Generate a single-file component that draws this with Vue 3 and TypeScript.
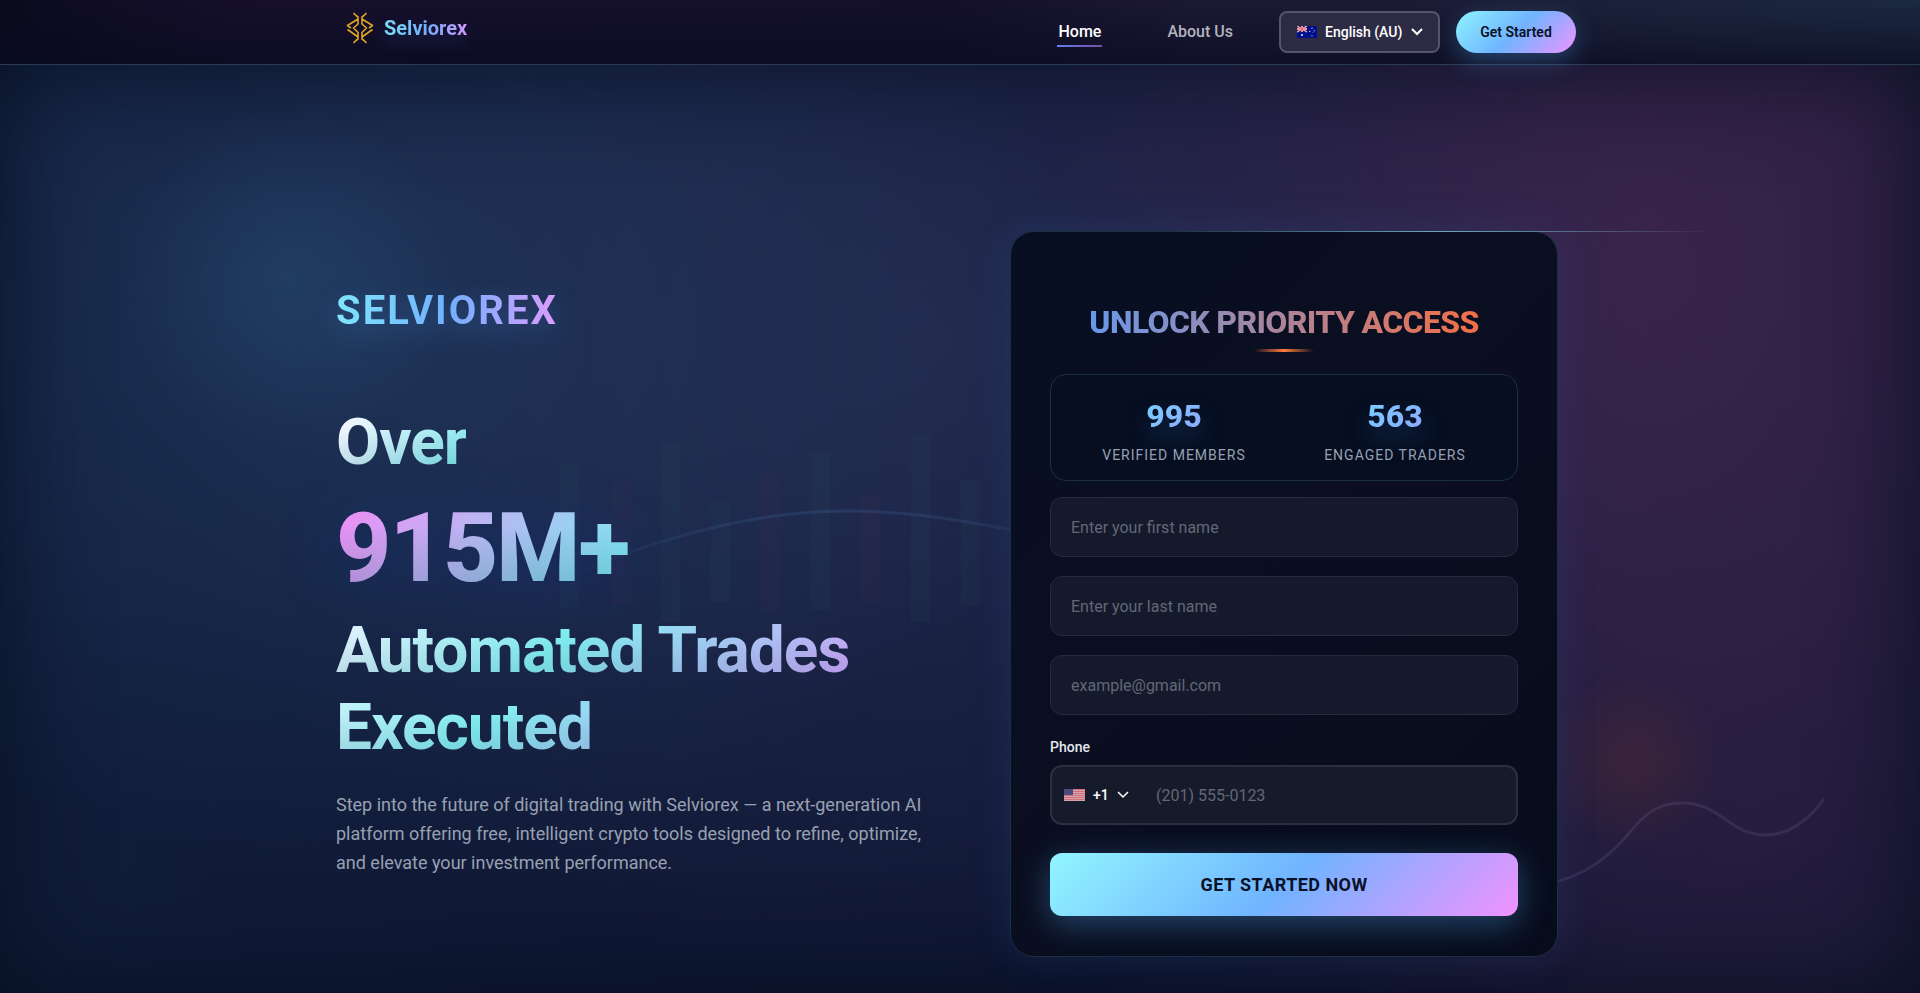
<script setup lang="ts">
import { ref } from 'vue'

interface Candle { x: number; y: number; h: number; up: boolean }
interface Field { id: string; type: string; label: string; placeholder: string }

const candles: Candle[] = [
  { x: 560, y: 462, h: 146, up: true },
  { x: 611, y: 480, h: 124, up: false },
  { x: 661, y: 442, h: 180, up: true },
  { x: 711, y: 502, h: 100, up: true },
  { x: 761, y: 474, h: 136, up: false },
  { x: 811, y: 452, h: 158, up: true },
  { x: 861, y: 494, h: 108, up: false },
  { x: 911, y: 434, h: 188, up: true },
  { x: 961, y: 480, h: 126, up: true },
]

const stats = [
  { value: '995', label: 'Verified Members' },
  { value: '563', label: 'Engaged Traders' },
]

const fields: Field[] = [
  { id: 'first-name', type: 'text', label: 'First name', placeholder: 'Enter your first name' },
  { id: 'last-name', type: 'text', label: 'Last name', placeholder: 'Enter your last name' },
  { id: 'email', type: 'email', label: 'Email', placeholder: 'example@gmail.com' },
]

const form = ref<Record<string, string>>({ 'first-name': '', 'last-name': '', email: '' })
const phone = ref('')
const language = ref('en-AU')
const dialCode = ref('+1')
</script>

<template>
  <div class="page">
    <header class="header">
      <div class="header-inner">
        <a class="logo" href="#">
          <svg class="logo-mark" width="28" height="32" viewBox="0 0 28 32" aria-hidden="true">
            <g fill="none" stroke="#e0a526" stroke-width="1.6" stroke-linejoin="round">
              <path d="M7.500 1l2.500 2.500 2 1.500V12L7.500 16l4.500 4.500V27l-2 1.500L7.500 31M12 7L1.500 13.500 5 16M1.500 17.500L12 25" />
              <path d="M20.500 1L18 3.500 16 5V12l4.500 4-4.500 4.500V27l2 1.500 2.500 2.500M16 7l10.500 6.500L23 16M26.500 17.500L16 25" />
            </g>
          </svg>
          <span class="logo-text">Selviorex</span>
        </a>
        <nav class="nav">
          <a class="nav-link active" href="#">Home</a>
          <a class="nav-link" href="#about">About Us</a>
        </nav>
        <div class="language">
          <svg width="20" height="12" viewBox="0 0 20 12" aria-hidden="true">
            <rect width="20" height="12" fill="#00108a" />
            <path d="M0 0l10 6M10 0L0 6" stroke="#fff" stroke-width="1.400" />
            <path d="M0 0l10 6M10 0L0 6" stroke="#e0303c" stroke-width="0.600" />
            <path d="M5 0v6M0 3h10" stroke="#fff" stroke-width="2" />
            <path d="M5 0v6M0 3h10" stroke="#e0303c" stroke-width="1.100" />
            <g fill="#dfe4ff">
              <circle cx="5" cy="9" r="1" />
              <circle cx="15" cy="2.200" r="0.600" />
              <circle cx="12.800" cy="5.400" r="0.600" />
              <circle cx="17.200" cy="4.800" r="0.600" />
              <circle cx="15" cy="9.800" r="0.600" />
              <circle cx="16" cy="6.600" r="0.400" />
            </g>
          </svg>
          <select v-model="language" aria-label="Language">
            <option value="en-AU">English (AU)</option>
          </select>
          <svg class="chevron" width="12" height="8" viewBox="0 0 12 8" aria-hidden="true">
            <path d="M1 1l5 5 5-5" fill="none" stroke="#fff" stroke-width="2" />
          </svg>
        </div>
        <button class="header-cta" type="button">Get Started</button>
      </div>
    </header>

    <main class="hero">
      <svg class="backdrop" viewBox="0 0 1920 993" preserveAspectRatio="xMidYMin slice" aria-hidden="true">
        <defs>
          <linearGradient id="trend-a" x1="0" x2="1" y1="0" y2="0">
            <stop offset="0" stop-color="#6fb1ff" stop-opacity="0" />
            <stop offset="0.250" stop-color="#6fb1ff" stop-opacity="0.080" />
            <stop offset="0.600" stop-color="#6fb1ff" stop-opacity="0.120" />
            <stop offset="1" stop-color="#6fb1ff" stop-opacity="0.080" />
          </linearGradient>
        </defs>
        <rect
          v-for="candle in candles"
          :key="candle.x"
          :class="candle.up ? 'up' : 'down'"
          :x="candle.x"
          :y="candle.y"
          :height="candle.h"
          width="19"
        />
        <path d="M560 580C640 545 740 511 845 511C920 511 970 523 1020 531" fill="none" stroke="url(#trend-a)" stroke-width="3" />
        <path
          d="M1540 884C1570 882 1600 866 1625 838C1650 806 1664 803 1683 803C1720 803 1730 835 1765 835C1790 835 1810 818 1824 799"
          fill="none"
          stroke="#a08cd8"
          stroke-opacity="0.140"
          stroke-width="3"
        />
      </svg>

      <div class="hero-inner">
        <section class="intro">
          <p class="brand">SELVIOREX</p>
          <h1 class="headline">
            <span class="line-over">Over</span>
            <span class="line-number">915M+</span>
            <span class="line-rest">Automated Trades Executed</span>
          </h1>
          <p class="lead">
            Step into the future of digital trading with Selviorex — a next-generation AI platform offering free,
            intelligent crypto tools designed to refine, optimize, and elevate your investment performance.
          </p>
        </section>

        <form class="card" @submit.prevent>
          <h2 class="card-title">UNLOCK PRIORITY ACCESS</h2>
          <div class="stats">
            <div v-for="stat in stats" :key="stat.label" class="stat">
              <strong>{{ stat.value }}</strong>
              <span>{{ stat.label }}</span>
            </div>
          </div>
          <div class="fields">
            <input
              v-for="field in fields"
              :id="field.id"
              :key="field.id"
              v-model="form[field.id]"
              class="field"
              :type="field.type"
              :aria-label="field.label"
              :placeholder="field.placeholder"
            />
          </div>
          <label class="phone-label" for="phone">Phone</label>
          <div class="phone">
            <div class="dial">
              <svg width="21" height="12" viewBox="0 0 21 12" aria-hidden="true">
                <rect width="21" height="12" fill="#d9a3ab" />
                <path d="M0 .5h21M0 2.500h21M0 4.500h21M0 6.500h21M0 8.500h21M0 10.500h21" stroke="#cf7080" stroke-width="1" />
                <rect width="9" height="6" fill="#4b4a78" />
              </svg>
              <select v-model="dialCode" aria-label="Country code">
                <option value="+1">+1</option>
              </select>
              <svg class="chevron" width="12" height="8" viewBox="0 0 12 8" aria-hidden="true">
                <path d="M1 1l5 5 5-5" fill="none" stroke="#fff" stroke-width="1.500" />
              </svg>
            </div>
            <input id="phone" v-model="phone" type="tel" placeholder="(201) 555-0123" />
          </div>
          <button class="submit" type="submit">GET STARTED NOW</button>
        </form>
      </div>
    </main>
  </div>
</template>

<style>
body {
  margin: 0;
  background: #0a1028;
}
</style>

<style scoped>
.page {
  display: flex;
  flex-direction: column;
  min-height: 100vh;
  overflow: hidden;
  color: #fff;
  font-family: Roboto, 'Liberation Sans', sans-serif;
}

.page *,
.page *::before,
.page *::after {
  box-sizing: border-box;
}

button,
input,
select {
  font-family: inherit;
}

.header {
  position: relative;
  z-index: 2;
  border-bottom: 1px solid #293c55;
  background:
    radial-gradient(ellipse 30% 120% at 100% 0, rgba(32, 66, 84, 0.35), transparent),
    linear-gradient(180deg, rgba(10, 8, 30, 0) 0, rgba(6, 10, 30, 0.6) 100%),
    linear-gradient(90deg, #0b0b1d 0, #160f2b 12%, #14102c 50%, #1c1934 62%, #191b35 100%);
}

.header-inner {
  display: flex;
  align-items: center;
  max-width: 1280px;
  height: 64px;
  margin: 0 auto;
  padding: 0 24px;
}

.logo {
  display: flex;
  align-items: center;
  gap: 10px;
  margin: 0 auto 8px 2px;
  text-decoration: none;
}

.logo-text {
  background: linear-gradient(90deg, #7ae0f8, #74aefc 50%, #cf97fb);
  background-clip: text;
  color: transparent;
  font-size: 20px;
  font-weight: 700;
  filter: drop-shadow(0 8px 8px rgba(60, 130, 255, 0.2));
}

.nav {
  display: flex;
  gap: 64px;
  margin-right: 45px;
}

.nav-link {
  padding: 4px 1px 2px;
  border-bottom: 2px solid transparent;
  color: #b3b2be;
  font-size: 16px;
  font-weight: 500;
  line-height: 22px;
  text-decoration: none;
}

.nav-link.active {
  border-image: linear-gradient(90deg, #667eea, #764ba2) 1;
  color: #fff;
}

.language {
  display: flex;
  align-items: center;
  gap: 8px;
  height: 42px;
  margin-right: 16px;
  padding: 0 15px 0 16px;
  border: 2px solid #56536a;
  border-radius: 8px;
  background: #2d2b43;
}

select {
  margin: 0;
  padding: 0;
  border: 0;
  background: transparent;
  color: #fff;
  font-size: 14px;
  font-weight: 500;
  appearance: none;
}

.header-cta {
  width: 120px;
  height: 42px;
  padding: 0;
  border: 0;
  border-radius: 21px;
  background: linear-gradient(135deg, #8ef4ff, #70b4ff 50%, #ef94ff);
  box-shadow: 0 8px 24px rgba(90, 180, 255, 0.3);
  color: #0a1128;
  font-size: 14px;
  font-weight: 600;
}

.hero {
  position: relative;
  display: flex;
  flex: 1;
  justify-content: center;
  background:
    radial-gradient(circle 90px at 85% 75%, rgba(110, 50, 40, 0.28), transparent),
    radial-gradient(circle 170px at 15% 23%, rgba(44, 88, 130, 0.3), transparent),
    radial-gradient(ellipse 38% 58% at 19% 28%, rgba(38, 72, 112, 0.45), transparent),
    radial-gradient(ellipse 32% 90% at 86% 22%, rgba(78, 42, 84, 0.6), transparent),
    radial-gradient(ellipse 40% 70% at 48% 30%, rgba(48, 52, 92, 0.5), transparent),
    linear-gradient(100deg, rgba(18, 38, 66, 0.4), rgba(14, 20, 50, 0) 60%, rgba(40, 28, 62, 0.5) 90%),
    linear-gradient(180deg, #161c3e 0, #131b3c 50%, #0f1632 100%);
}

.hero::after {
  position: absolute;
  inset: 0;
  box-shadow: inset 0 0 100px rgba(6, 14, 30, 0.85);
  content: '';
  pointer-events: none;
}

.backdrop {
  position: absolute;
  top: -65px;
  left: 0;
  width: 100%;
  height: calc(100% + 65px);
}

.backdrop .up {
  fill: rgba(52, 130, 120, 0.05);
}

.backdrop .down {
  fill: rgba(130, 50, 90, 0.05);
}

.hero-inner {
  position: relative;
  z-index: 1;
  display: grid;
  grid-template-columns: 1fr 1fr;
  align-items: center;
  gap: 48px;
  width: 100%;
  max-width: 1248px;
  padding: 166px 0 36px;
}

.intro {
  padding-bottom: 25px;
}

.brand {
  width: fit-content;
  margin: 0 0 69px;
  background: linear-gradient(90deg, #7fe6fb, #70b0ff 50%, #dc9cff);
  background-clip: text;
  color: transparent;
  font-size: 40px;
  font-weight: 700;
  line-height: 48px;
  letter-spacing: 2px;
  filter: drop-shadow(0 8px 12px rgba(80, 160, 255, 0.25));
}

.headline {
  display: flex;
  flex-direction: column;
  align-items: flex-start;
  margin: 0 0 24px;
  font-size: 64px;
  font-weight: 700;
  line-height: 77px;
  letter-spacing: -1px;
}

.headline span {
  background-clip: text;
  color: transparent;
}

.headline .line-over {
  background-image: linear-gradient(180deg, transparent 30%, rgba(30, 50, 90, 0.16)), linear-gradient(135deg, #f0f6ff 15%, #80eaee 90%);
}

.headline .line-number {
  margin: 10px 0 6px;
  background-image: linear-gradient(180deg, transparent 30%, rgba(30, 50, 90, 0.25)), linear-gradient(135deg, #e792f4 10%, #7ceaf2 90%);
  font-size: 96px;
  font-weight: 800;
  line-height: 115px;
  letter-spacing: -0.02em;
  filter: drop-shadow(0 8px 30px rgba(10, 50, 160, 0.3));
}

.headline .line-rest {
  width: 515px;
  background-image: linear-gradient(180deg, transparent 30%, rgba(30, 50, 90, 0.16)), linear-gradient(135deg, #eaf3ff, #80eef0 38%, #c8a8f8 85%);
  background-size: 100% 77px, 100% 100%;
}

.lead {
  max-width: 594px;
  margin: 0;
  color: #98a0b2;
  font-size: 18px;
  line-height: 29px;
}

.card {
  position: relative;
  display: flex;
  flex-direction: column;
  justify-self: center;
  width: 100%;
  max-width: 548px;
  padding: 71px 39px 40px;
  border: 1px solid #1c2f40;
  border-radius: 24px;
  background: linear-gradient(135deg, #080f22, #0a0e20 50%, #070c1c);
  box-shadow: 0 0 40px rgba(60, 110, 190, 0.16);
}

.card::before {
  position: absolute;
  top: -1px;
  left: 29%;
  width: 100%;
  height: 1px;
  background: linear-gradient(90deg, transparent, rgba(140, 220, 230, 0.7), transparent);
  content: '';
}

.card-title {
  position: relative;
  margin: 0 0 22px;
  padding-bottom: 11px;
  background: linear-gradient(90deg, #5a9dfb 0, #ff6b35 100%);
  background-clip: text;
  color: transparent;
  font-size: 32px;
  font-weight: 800;
  line-height: 38px;
  letter-spacing: -0.02em;
  text-align: center;
}

.card-title::after {
  position: absolute;
  bottom: 0;
  left: calc(50% - 30px);
  width: 60px;
  height: 3px;
  background: linear-gradient(90deg, transparent, #ff7a3c, transparent);
  content: '';
}

.stats {
  display: flex;
  justify-content: space-around;
  margin-bottom: 16px;
  padding: 22px 12px 15px;
  border: 1px solid #1b2f3f;
  border-radius: 16px;
  background: #060e20;
}

.stat {
  display: flex;
  flex-direction: column;
  align-items: center;
  gap: 10px;
}

.stat strong {
  background: linear-gradient(135deg, #76d0ff, #8fa8ff);
  background-clip: text;
  color: transparent;
  font-size: 32px;
  font-weight: 800;
  line-height: 38px;
  filter: drop-shadow(0 12px 12px rgba(60, 140, 255, 0.25));
}

.stat span {
  color: #98a0b2;
  font-size: 14px;
  line-height: 20px;
  letter-spacing: 1px;
  text-transform: uppercase;
}

.fields {
  display: flex;
  flex-direction: column;
  gap: 19px;
}

.field {
  width: 100%;
  height: 60px;
  padding: 0 20px;
  border: 1px solid #252b3b;
  border-radius: 12px;
  background: #141a2b;
  color: #fff;
  font-size: 16px;
}

input {
  outline: none;
}

input::placeholder {
  color: #626776;
  opacity: 1;
}

.phone-label {
  margin: 22px 0 8px;
  color: #e4e6ee;
  font-size: 14px;
  font-weight: 500;
  line-height: 20px;
}

.phone {
  display: flex;
  align-items: center;
  height: 60px;
  margin-bottom: 28px;
  border: 2px solid #2b303f;
  border-radius: 12px;
  background: #161b2b;
}

.dial {
  display: flex;
  align-items: center;
  gap: 8px;
  padding: 0 12px;
}

.phone input {
  flex: 1;
  min-width: 0;
  height: 100%;
  padding: 0 15px;
  border: 0;
  background: transparent;
  color: #fff;
  font-size: 16px;
}

.submit {
  height: 63px;
  border: 0;
  border-radius: 12px;
  background: linear-gradient(135deg, #92f6ff, #70b4ff 50%, #f092ff);
  box-shadow: 0 8px 32px rgba(90, 180, 255, 0.35);
  color: #0a1128;
  font-size: 18px;
  font-weight: 700;
  letter-spacing: 0.025em;
}

@media (max-width: 1280px) {
  .hero-inner {
    grid-template-columns: minmax(0, 600px);
    justify-content: center;
    padding: 80px 24px;
  }
}
</style>
